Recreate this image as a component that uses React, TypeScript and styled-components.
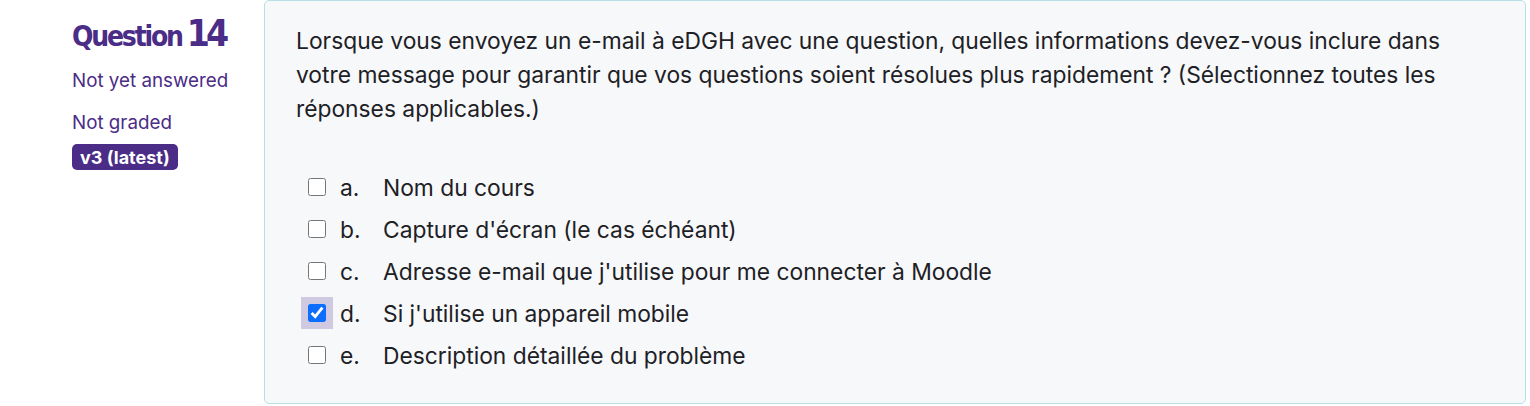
import React from 'react';
import styled, { createGlobalStyle } from 'styled-components';

const GlobalStyle = createGlobalStyle`
	html, body {
		margin: 0;
		padding: 0;
		background: #ffffff;
	}
	body {
		font-family: Inter, "Noto Sans", "Liberation Sans", sans-serif;
		color: #1d2125;
	}
`;

const purple = '#4b2c86';

const Page = styled.div`
	display: flex;
	align-items: flex-start;
	width: 1530px;
	height: 406px;
	box-sizing: border-box;
	padding-right: 4px;
`;

const Info = styled.div`
	width: 264px;
	flex-shrink: 0;
	box-sizing: border-box;
	padding: 14px 0 0 72px;
	display: flex;
	flex-direction: column;
	align-items: flex-start;
	color: ${purple};
`;

const QuestionTitle = styled.h3`
	margin: 0;
	font-family: "DejaVu Sans Condensed", "DejaVu Sans", sans-serif;
	font-weight: 700;
	font-size: 28px;
	line-height: 40px;
	letter-spacing: -2.2px;
	display: flex;
	align-items: baseline;
	gap: 5px;
`;

const QuestionNumber = styled.span`
	font-size: 37px;
	letter-spacing: -4px;
`;

const StateText = styled.div<{ $gap?: number }>`
	font-size: 18.8px;
	line-height: 24px;
	margin-top: ${({ $gap }) => $gap ?? 0}px;
`;

const Badge = styled.span`
	margin-top: 9px;
	display: inline-flex;
	align-items: center;
	box-sizing: border-box;
	height: 26px;
	background: ${purple};
	color: #ffffff;
	font-weight: 700;
	font-size: 18px;
	padding: 0 8px;
	border-radius: 5px;
`;

const Formulation = styled.div`
	flex: 1;
	box-sizing: border-box;
	height: 404px;
	background: #f7f8fa;
	border: 1px solid #b7dfe6;
	border-radius: 5px;
	padding: 23px 31px 0 31px;
`;

const QuestionText = styled.p`
	margin: 0;
	font-size: 22.8px;
	line-height: 34px;
	color: #1d2125;
`;

const Answers = styled.div`
	margin-top: 40px;
	display: flex;
	flex-direction: column;
	padding-left: 12px;
`;

const AnswerRow = styled.label`
	display: flex;
	align-items: center;
	height: 42px;
	font-size: 22.8px;
	color: #1d2125;
`;

const Check = styled.input.attrs({ type: 'checkbox' })<{ $focused?: boolean }>`
	margin: 0;
	width: 18px;
	height: 18px;
	accent-color: #0d6efd;
	box-shadow: ${({ $focused }) => ($focused ? '0 0 0 6px #cfc9e1' : 'none')};
	outline: ${({ $focused }) => ($focused ? '1px solid #cfc9e1' : 'none')};
	outline-offset: 6px;
`;

const Letter = styled.span`
	width: 43px;
	margin-left: 14px;
`;

const options = [
	{ letter: 'a.', text: 'Nom du cours', checked: false },
	{ letter: 'b.', text: "Capture d'écran (le cas échéant)", checked: false },
	{ letter: 'c.', text: "Adresse e-mail que j'utilise pour me connecter à Moodle", checked: false },
	{ letter: 'd.', text: "Si j'utilise un appareil mobile", checked: true },
	{ letter: 'e.', text: 'Description détaillée du problème', checked: false },
];

export default function App() {
	return (
		<>
			<GlobalStyle />
			<Page>
				<Info>
					<QuestionTitle>
						Question<QuestionNumber>14</QuestionNumber>
					</QuestionTitle>
					<StateText $gap={12}>Not yet answered</StateText>
					<StateText $gap={18}>Not graded</StateText>
					<Badge>v3 (latest)</Badge>
				</Info>
				<Formulation>
					<QuestionText>
						Lorsque vous envoyez un e-mail à eDGH avec une question, quelles informations devez-vous inclure dans
						votre message pour garantir que vos questions soient résolues plus rapidement ? (Sélectionnez toutes les
						réponses applicables.)
					</QuestionText>
					<Answers>
						{options.map((o) => (
							<AnswerRow key={o.letter}>
								<Check defaultChecked={o.checked} $focused={o.checked} />
								<Letter>{o.letter}</Letter>
								{o.text}
							</AnswerRow>
						))}
					</Answers>
				</Formulation>
			</Page>
		</>
	);
}
